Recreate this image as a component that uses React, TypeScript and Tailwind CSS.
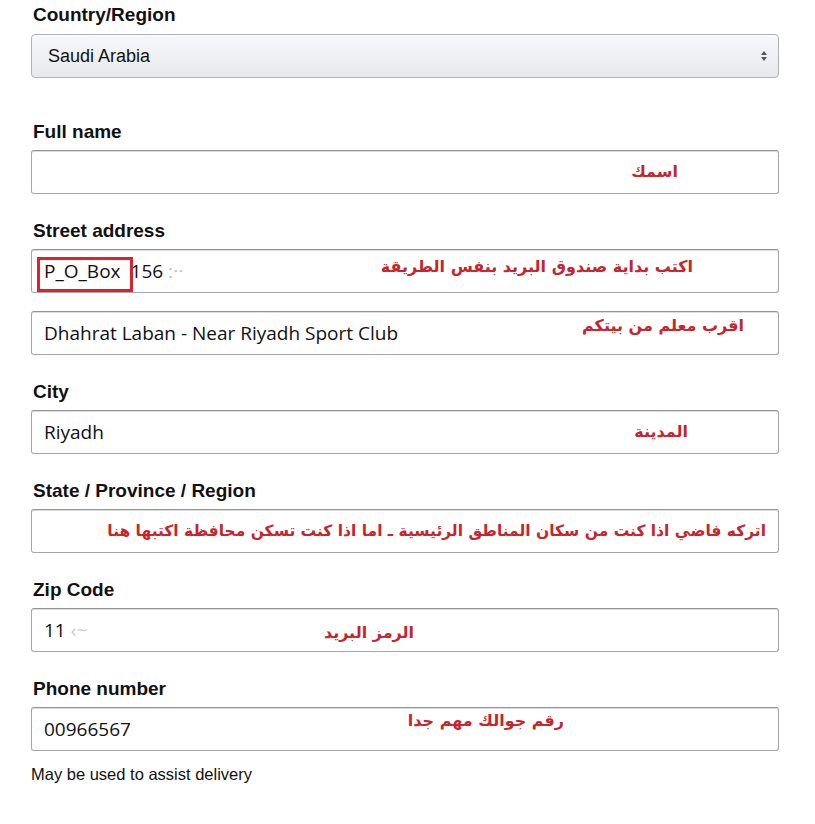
import { ReactNode } from 'react'

const labelCls = 'ml-[2px] h-[22px] text-[19px] font-bold leading-[22px] text-[#111]'
const inputCls =
  'relative flex h-[44px] w-full items-center rounded-[3px] border border-[#a6a6a6] border-t-[#949494] bg-white px-[12px] text-[19px] text-[#111] shadow-[inset_0_1px_0_rgba(15,17,17,0.15)]'
const valueFont = { fontFamily: '"Open Sans", "Liberation Sans", sans-serif' }

function Note({ children, className }: { children: ReactNode; className: string }) {
  return (
    <span
      dir="rtl"
      className={`absolute whitespace-nowrap font-bold text-[#c8242b] ${className}`}
      style={{ fontFamily: '"DejaVu Sans", sans-serif' }}
    >
      {children}
    </span>
  )
}

function Field({ label, children }: { label: string; children: ReactNode }) {
  return (
    <div className="flex flex-col gap-[7px]">
      <label className={labelCls}>{label}</label>
      {children}
    </div>
  )
}

export default function App() {
  return (
    <div className="min-h-[824px] w-[815px] bg-white pt-[4px]" style={{ fontFamily: '"Liberation Sans", Arial, sans-serif' }}>
      <div className="ml-[31px] flex w-[748px] flex-col gap-[26px]">
        <div className="mb-[17px] flex flex-col gap-[8px]">
          <label className={labelCls}>Country/Region</label>
          <div className="flex h-[44px] items-center justify-between rounded-[4px] border border-[#adb1b8] bg-gradient-to-b from-[#f7f8fa] to-[#e7e9ec] pl-[16px] pr-[10px] text-[18px] text-[#111] shadow-[0_1px_0_rgba(255,255,255,0.6)_inset]">
            <span>Saudi Arabia</span>
            <svg width="8" height="12" viewBox="0 0 8 12" className="text-[#555]">
              <path d="M4 1 L7 5 H1 Z" fill="currentColor" />
              <path d="M4 11 L7 7 H1 Z" fill="currentColor" />
            </svg>
          </div>
        </div>

        <Field label="Full name">
          <div className={inputCls}>
            <Note className="right-[100px] top-[9px] text-[16px]">اسمك</Note>
          </div>
        </Field>

        <Field label="Street address">
          <div className="flex flex-col gap-[18px]">
            <div className={inputCls} style={valueFont}>
              <span className="relative">
                <span className="absolute -left-[7px] top-0 h-[35px] w-[96px] border-[3px] border-[#e0202a]" />
                P_O_Box<span className="ml-[10px]">156</span> <span className="text-[#bbb]">:ᐧᐧ</span>
              </span>
              <Note className="right-[85px] top-[5px] text-[16px]">اكتب بداية صندوق البريد بنفس الطريقة</Note>
            </div>
            <div className={inputCls} style={valueFont}>
              <span>Dhahrat Laban - Near Riyadh Sport Club</span>
              <Note className="right-[34px] top-[2px] text-[16px]">اقرب معلم من بيتكم</Note>
            </div>
          </div>
        </Field>

        <Field label="City">
          <div className={inputCls} style={valueFont}>
            <span>Riyadh</span>
            <Note className="right-[90px] top-[9px] text-[16px]">المدينة</Note>
          </div>
        </Field>

        <Field label="State / Province / Region">
          <div className={inputCls}>
            <Note className="right-[12px] top-[10px] text-[15.5px]">
              اتركه فاضي اذا كنت من سكان المناطق الرئيسية ـ اما اذا كنت تسكن محافظة اكتبها هنا
            </Note>
          </div>
        </Field>

        <Field label="Zip Code">
          <div className={inputCls} style={valueFont}>
            <span>
              11<span className="text-[#ccc]"> ‹~</span>
            </span>
            <Note className="right-[364px] top-[12px] text-[16px]">الرمز البريد</Note>
          </div>
        </Field>

        <div className="flex flex-col gap-[13px]">
          <Field label="Phone number">
            <div className={inputCls} style={valueFont}>
              <span>00966567</span>
              <Note className="right-[214px] top-[1px] text-[16px]">رقم جوالك مهم جدا</Note>
            </div>
          </Field>
          <p className="text-[16.5px] leading-[20px] text-[#111]">May be used to assist delivery</p>
        </div>
      </div>
    </div>
  )
}
